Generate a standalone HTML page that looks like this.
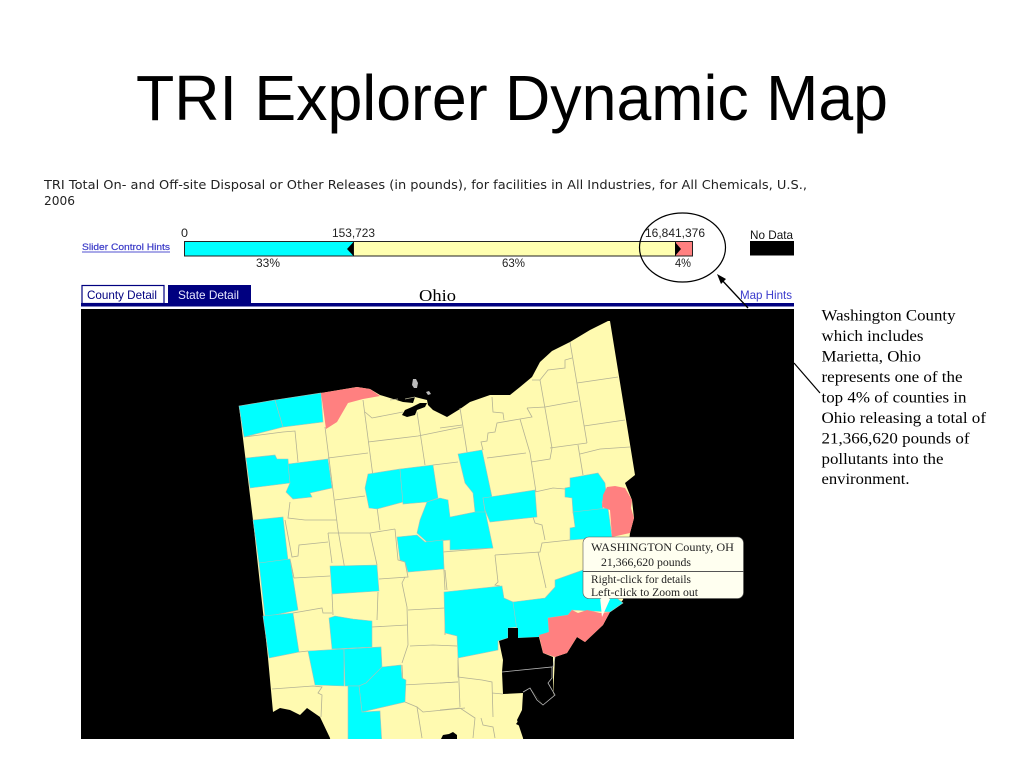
<!DOCTYPE html>
<html lang="en">
<head>
<meta charset="utf-8">
<title>TRI Explorer Dynamic Map</title>
<style>
html,body{margin:0;padding:0;background:#fff;width:1024px;height:768px;overflow:hidden}
svg{display:block}
.s{font-family:"Liberation Sans",sans-serif}
.t{font-family:"Liberation Serif",serif}
.d{font-family:"DejaVu Sans",sans-serif}
.c{fill:#00ffff;stroke:#a6c4bc;stroke-width:.6}
.r{fill:#ff8080;stroke:none}
.l{fill:none;stroke:#b4b294;stroke-width:.8}
</style>
</head>
<body>
<svg width="1024" height="768" viewBox="0 0 1024 768" xmlns="http://www.w3.org/2000/svg">
<rect width="1024" height="768" fill="#fff"/>
<text class="s" x="136" y="120" font-size="64" textLength="752" lengthAdjust="spacingAndGlyphs" fill="#000">TRI Explorer Dynamic Map</text>

<text class="d" x="44" y="189" font-size="12" textLength="763" lengthAdjust="spacingAndGlyphs" fill="#222">TRI Total On- and Off-site Disposal or Other Releases (in pounds), for facilities in All Industries, for All Chemicals, U.S.,</text>
<text class="d" x="44" y="205" font-size="12" textLength="31" lengthAdjust="spacingAndGlyphs" fill="#222">2006</text>

<!-- slider -->
<text class="s" x="82" y="250" font-size="9" textLength="88" lengthAdjust="spacingAndGlyphs" fill="#3c3cc8" stroke="#3c3cc8" stroke-width=".2">Slider Control Hints</text>
<line x1="82" y1="252" x2="170" y2="252" stroke="#5050d0" stroke-width="1"/>
<rect x="184.500" y="241.500" width="169" height="14.500" fill="#00ffff" stroke="#222" stroke-width="1"/>
<rect x="353.500" y="241.500" width="322" height="14.500" fill="#ffffb0" stroke="#222" stroke-width="1"/>
<rect x="675.500" y="241.500" width="17" height="14.500" fill="#ff8080" stroke="#222" stroke-width="1"/>
<polygon points="347,249 353.500,242 353.500,256" fill="#000"/>
<polygon points="681,249 675,242 675,256" fill="#000"/>
<text class="s" x="181" y="237" font-size="12" textLength="7" lengthAdjust="spacingAndGlyphs" fill="#222">0</text>
<text class="s" x="332" y="237" font-size="12" textLength="43" lengthAdjust="spacingAndGlyphs" fill="#222">153,723</text>
<text class="s" x="645" y="237" font-size="12" textLength="60" lengthAdjust="spacingAndGlyphs" fill="#222">16,841,376</text>
<text class="s" x="256" y="267" font-size="12" textLength="24" lengthAdjust="spacingAndGlyphs" fill="#222">33%</text>
<text class="s" x="502" y="267" font-size="12" textLength="23" lengthAdjust="spacingAndGlyphs" fill="#222">63%</text>
<text class="s" x="675" y="267" font-size="12" textLength="16" lengthAdjust="spacingAndGlyphs" fill="#222">4%</text>
<text class="s" x="750" y="239" font-size="12" textLength="43" lengthAdjust="spacingAndGlyphs" fill="#111">No Data</text>
<rect x="750" y="241" width="44" height="14.500" fill="#000"/>

<!-- tabs -->
<rect x="82" y="285.500" width="82" height="18" fill="#fff" stroke="#000080" stroke-width="1.200"/>
<text class="s" x="87" y="299" font-size="12" textLength="70" lengthAdjust="spacingAndGlyphs" fill="#000080">County Detail</text>
<rect x="168" y="285" width="83" height="18" fill="#000080"/>
<text class="s" x="178" y="299" font-size="12" textLength="61" lengthAdjust="spacingAndGlyphs" fill="#e8e8ff">State Detail</text>
<text class="t" x="419" y="301" font-size="17" textLength="37" lengthAdjust="spacingAndGlyphs" fill="#000">Ohio</text>
<text class="s" x="740" y="299" font-size="12" textLength="52" lengthAdjust="spacingAndGlyphs" fill="#3a3acc">Map Hints</text>
<rect x="81" y="303" width="713" height="3.500" fill="#000080"/>
<rect x="81" y="309" width="713" height="430" fill="#000"/>

<!-- state -->
<clipPath id="m"><rect x="81" y="309" width="713" height="430"/></clipPath>
<g clip-path="url(#m)">
<polygon fill="#fffab0" points="239,406 321,393 357,387 370,389 380,395 403,402 413,403 415,397 427,400 428,405 433,410 447,417 460,409 470,402 490,395 510,395 520,387 532,377 540,362 552,351 570,342 590,330 608,321 610,321 635,475 625,483 632,500 634,518 630,533 623,600 610,612 603,625 585,642 577,637 567,653 555,657 553,697 543,705 530,688 523,693 522,710 517,720 523,738 524,745 331,745 330,738 320,717 307,708 300,715 290,710 280,708 273,712 268,658 253,520"/>

<!-- bay and islands -->
<path d="M402,415 L405,410 L412,407 L420,403 L427,403 L425,407 L417,410 L415,415 L407,417Z" fill="#000"/>
<path d="M413,379l3,0l2,4l-1,5l-3,0l-2,-3Z" fill="#bbb"/>
<path d="M426,392l3,-1l2,3l-3,1Z" fill="#bbb"/>
<path d="M405,399l10,-2M390,400l8,-1" stroke="#b4b294" stroke-width=".7" fill="none"/>

<!-- county lines -->
<g class="l">
<polyline points="325,427 338,530 345,570"/>
<polyline points="363,400 380,530"/>
<polyline points="244,437 283,432 295,431 298,462"/>
<polyline points="328,458 368,453"/>
<polyline points="368,442 418,436 462,427"/>
<polyline points="335,500 365,496"/>
<polyline points="365,412 372,418 403,412"/>
<polyline points="417,412 425,465"/>
<polyline points="460,408 467,452"/>
<polyline points="433,465 458,462"/>
<polyline points="290,502 288,518 305,520 337,520"/>
<polyline points="570,342 587,443"/>
<polyline points="577,383 618,377"/>
<polyline points="584,426 625,420"/>
<polyline points="550,448 587,443"/>
<polyline points="580,454 600,449 630,447"/>
<polyline points="578,445 583,475"/>
<polyline points="532,380 540,380 548,370 565,368 565,360 572,358"/>
<polyline points="540,380 552,448 550,459 531,462"/>
<polyline points="527,408 545,407 578,401"/>
<polyline points="527,408 532,417 520,419 497,423 495,432 488,433 487,441 481,442 483,450"/>
<polyline points="492,397 493,412 503,413 504,420"/>
<polyline points="440,428 462,425"/>
<polyline points="520,419 530,453 536,492"/>
<polyline points="487,458 526,453"/>
<polyline points="535,492 553,488 565,489"/>
<polyline points="533,517 535,523 542,525 545,540"/>
<polyline points="495,555 540,552 542,543 570,540"/>
<polyline points="538,552 546,588"/>
<polyline points="495,555 498,582 495,585 500,586"/>
<polyline points="443,552 493,548"/>
<polyline points="443,552 445,590"/>
<polyline points="458,660 458,677 482,680 492,682 493,717"/>
<polyline points="492,693 503,694"/>
<polyline points="440,683 458,682"/>
<polyline points="440,710 460,708 475,718 473,738"/>
<polyline points="481,718 483,725 493,727 495,738"/>
<polyline points="285,520 292,557 298,556 299,545 328,542"/>
<polyline points="328,533 332,563"/>
<polyline points="328,533 370,533 395,529"/>
<polyline points="370,533 377,565"/>
<polyline points="395,529 398,560 405,562 408,577 379,579"/>
<polyline points="294,578 330,576"/>
<polyline points="332,594 333,615"/>
<polyline points="293,613 322,608 323,613 332,613"/>
<polyline points="378,592 377,620"/>
<polyline points="405,577 402,583 407,607 408,645 402,663"/>
<polyline points="408,610 445,608"/>
<polyline points="445,570 447,590"/>
<polyline points="372,627 407,625"/>
<polyline points="410,646 433,645 457,646"/>
<polyline points="445,608 445,635"/>
<polyline points="402,665 403,685 458,682"/>
<polyline points="458,658 460,707"/>
<polyline points="405,702 417,707 423,712 465,708"/>
<polyline points="417,707 422,738"/>
<polyline points="272,689 313,686 322,687 318,693 322,695 321,717"/>
<polyline points="299,652 308,651"/>
<polyline points="290,559 294,578"/>
</g>

<!-- cyan counties -->
<polygon class="c" points="239,406 275,400 283,427 244,437"/>
<polygon class="c" points="275,400 321,393 323,422 283,427"/>
<polygon class="c" points="246,458 275,455 277,459 288,459 290,483 250,488"/>
<polygon class="c" points="288,464 328,459 332,488 310,493 312,497 293,499 286,492 290,483"/>
<polygon class="c" points="368,474 400,469 403,502 377,509 369,508 365,488"/>
<polygon class="c" points="400,469 433,465 438,498 427,502 403,504"/>
<polygon class="c" points="427,502 440,498 448,500 450,517 485,510 493,548 450,550 450,540 427,542 417,533 420,520"/>
<polygon class="c" points="397,537 417,535 425,542 443,540 444,569 408,572 405,562 400,560"/>
<polygon class="c" points="458,454 482,450 492,497 483,498 485,512 475,512 473,493 465,483"/>
<polygon class="c" points="483,498 535,490 537,517 490,522 485,510"/>
<polygon class="c" points="570,478 598,473 605,483 606,492 602,502 603,509 573,513 572,498 565,497 565,488 570,487"/>
<polygon class="c" points="573,512 608,508 612,537 570,540 570,528 575,527"/>
<polygon class="c" points="444,592 502,586 504,598 513,602 518,627 508,628 508,638 498,641 498,650 458,658 457,636 445,633"/>
<polygon class="c" points="513,602 545,598 555,587 555,580 583,570 623,603 610,612 572,610 568,615 548,618 549,632 540,637 518,638"/>
<polygon class="c" points="253,520 283,517 288,560 259,563"/>
<polygon class="c" points="259,563 290,559 298,610 265,617"/>
<polygon class="c" points="263,616 293,613 299,652 269,658"/>
<polygon class="c" points="330,566 377,565 379,591 332,594"/>
<polygon class="c" points="329,618 335,616 353,619 372,621 372,647 332,649"/>
<polygon class="c" points="308,651 344,649 344,686 315,685"/>
<polygon class="c" points="344,649 381,647 382,667 366,683 359,686 345,686"/>
<polygon class="c" points="366,683 382,667 401,665 402,678 406,680 405,702 362,712 359,686"/>
<polygon class="c" points="348,686 359,686 362,712 380,711 382,745 348,745"/>

<!-- red counties -->
<polygon class="r" points="321,393 357,387 370,389 380,396 363,399 348,403 337,422 326,429"/>
<polygon class="r" points="607,487 615,486 625,488 632,500 631,508 634,518 630,533 612,537 610,510 602,507 603,495"/>
<polygon class="r" points="548,618 568,615 572,610 578,613 587,610 600,613 610,612 603,625 585,642 577,637 567,653 555,657 543,653 539,635 549,632"/>

<!-- black counties -->
<polygon fill="#000" points="499,641 508,638 508,628 518,628 518,638 539,637 543,653 553,657 553,697 543,705 530,688 523,693 503,694 502,672 503,660"/>
<polyline points="502,672 552,667 552,678 548,683 555,695 543,705 537,700 530,688 523,692" fill="none" stroke="#b8b8b8" stroke-width=".8"/>
<line x1="555" y1="657" x2="553" y2="667" stroke="#b8b8b8" stroke-width=".8"/>
<path d="M441,739l2,-4l6,-1l4,-2l4,3l0,4Z" fill="#000"/>
<path d="M516,724l3,-4l2,0l1,7Z" fill="#000"/>

<!-- tooltip -->
<polygon points="600,597 611,597 602,617" fill="#fffff0"/>
<rect x="583" y="537" width="160.500" height="61.500" rx="6" ry="6" fill="#fffff0" stroke="#555" stroke-width=".6"/>
<polygon points="601,596 610,596 602,616" fill="#fffff0"/>
<line x1="583" y1="571.500" x2="743.500" y2="571.500" stroke="#555" stroke-width="1"/>
<text class="t" x="591" y="551" font-size="12" textLength="143" lengthAdjust="spacingAndGlyphs" fill="#222">WASHINGTON County, OH</text>
<text class="t" x="601" y="566" font-size="12" textLength="90" lengthAdjust="spacingAndGlyphs" fill="#222">21,366,620 pounds</text>
<text class="t" x="591" y="583" font-size="12" textLength="100" lengthAdjust="spacingAndGlyphs" fill="#222">Right-click for details</text>
<text class="t" x="591" y="596" font-size="12" textLength="107" lengthAdjust="spacingAndGlyphs" fill="#222">Left-click to Zoom out</text>
</g>

<!-- annotations -->
<ellipse cx="682.500" cy="247.500" rx="43" ry="34.500" fill="none" stroke="#000" stroke-width="1.200"/>
<line x1="748" y1="308" x2="720" y2="278" stroke="#000" stroke-width="1.300"/>
<polygon points="717,274 726,279 721,284" fill="#000"/>
<line x1="794" y1="363" x2="820" y2="393" stroke="#000" stroke-width="1.200"/>

<g class="t" font-size="16" fill="#000">
<text x="821.500" y="320.500" textLength="134" lengthAdjust="spacingAndGlyphs">Washington County</text>
<text x="821.500" y="341" textLength="102" lengthAdjust="spacingAndGlyphs">which includes</text>
<text x="821.500" y="361.500" textLength="99.500" lengthAdjust="spacingAndGlyphs">Marietta, Ohio</text>
<text x="821.500" y="382" textLength="141" lengthAdjust="spacingAndGlyphs">represents one of the</text>
<text x="821.500" y="402.500" textLength="145" lengthAdjust="spacingAndGlyphs">top 4% of counties in</text>
<text x="821.500" y="423" textLength="164.500" lengthAdjust="spacingAndGlyphs">Ohio releasing a total of</text>
<text x="821.500" y="443.500" textLength="148" lengthAdjust="spacingAndGlyphs">21,366,620 pounds of</text>
<text x="821.500" y="464" textLength="122" lengthAdjust="spacingAndGlyphs">pollutants into the</text>
<text x="821.500" y="484" textLength="88" lengthAdjust="spacingAndGlyphs">environment.</text>
</g>
</svg>
</body>
</html>
